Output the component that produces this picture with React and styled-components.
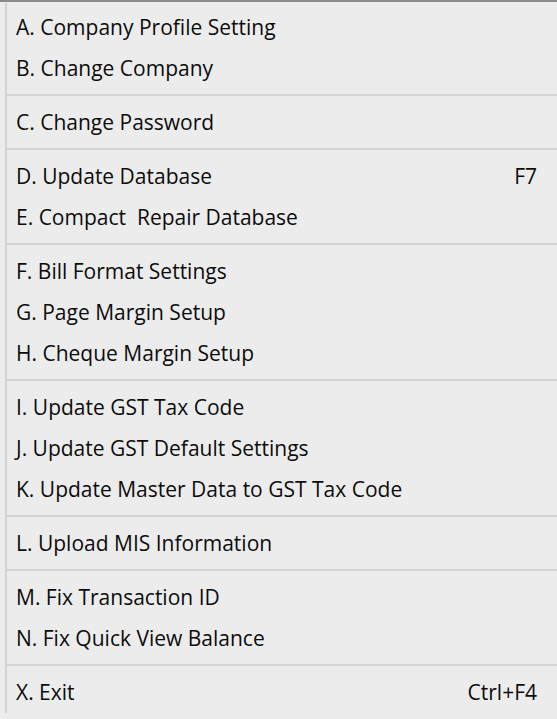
import styled, { createGlobalStyle } from "styled-components";

const GlobalStyle = createGlobalStyle`
  html, body {
    margin: 0;
    padding: 0;
    background: #ececec;
  }
`;

const groups = [
  [
    { label: "A. Company Profile Setting" },
    { label: "B. Change Company" },
  ],
  [{ label: "C. Change Password" }],
  [
    { label: "D. Update Database", shortcut: "F7" },
    { label: "E. Compact  Repair Database" },
  ],
  [
    { label: "F. Bill Format Settings" },
    { label: "G. Page Margin Setup" },
    { label: "H. Cheque Margin Setup" },
  ],
  [
    { label: "I. Update GST Tax Code" },
    { label: "J. Update GST Default Settings" },
    { label: "K. Update Master Data to GST Tax Code" },
  ],
  [{ label: "L. Upload MIS Information" }],
  [
    { label: "M. Fix Transaction ID" },
    { label: "N. Fix Quick View Balance" },
  ],
  [{ label: "X. Exit", shortcut: "Ctrl+F4" }],
];

const App = () => {
  return (
    <>
      <GlobalStyle />
      <MenuFrame>
        <Gutter>
          {groups.map((group, gi) => (
            <Group key={gi} first={gi === 0}>
              {group.map((item) => (
                <MenuItem key={item.label}>
                  <Label>{item.label}</Label>
                  {item.shortcut && <Shortcut>{item.shortcut}</Shortcut>}
                </MenuItem>
              ))}
            </Group>
          ))}
        </Gutter>
      </MenuFrame>
    </>
  );
};

const MenuFrame = styled.div`
  width: 557px;
  height: 719px;
  box-sizing: border-box;
  background: #ececec;
  border-top: 2px solid #8a8a8a;
  padding: 1px 0 5px 5px;
  font-family: "Open Sans", "Noto Sans", "Liberation Sans", sans-serif;
  color: #0c0c0c;
`;

const Gutter = styled.div`
  border-left: 2px solid #d3d3d3;
  display: flex;
  flex-direction: column;
  padding-top: 3px;
  padding-bottom: 1px;
`;

const Group = styled.div`
  display: flex;
  flex-direction: column;
  ${({ first }) =>
    !first &&
    `
    margin-top: 6px;
    padding-top: 5px;
    border-top: 2px solid #d5d5d5;
  `}
`;

const MenuItem = styled.div`
  height: 41px;
  display: flex;
  align-items: center;
  justify-content: space-between;
  padding: 0 20px 0 9px;
  font-size: 21px;
  white-space: pre;
`;

const Label = styled.span``;

const Shortcut = styled.span``;

export default App;
